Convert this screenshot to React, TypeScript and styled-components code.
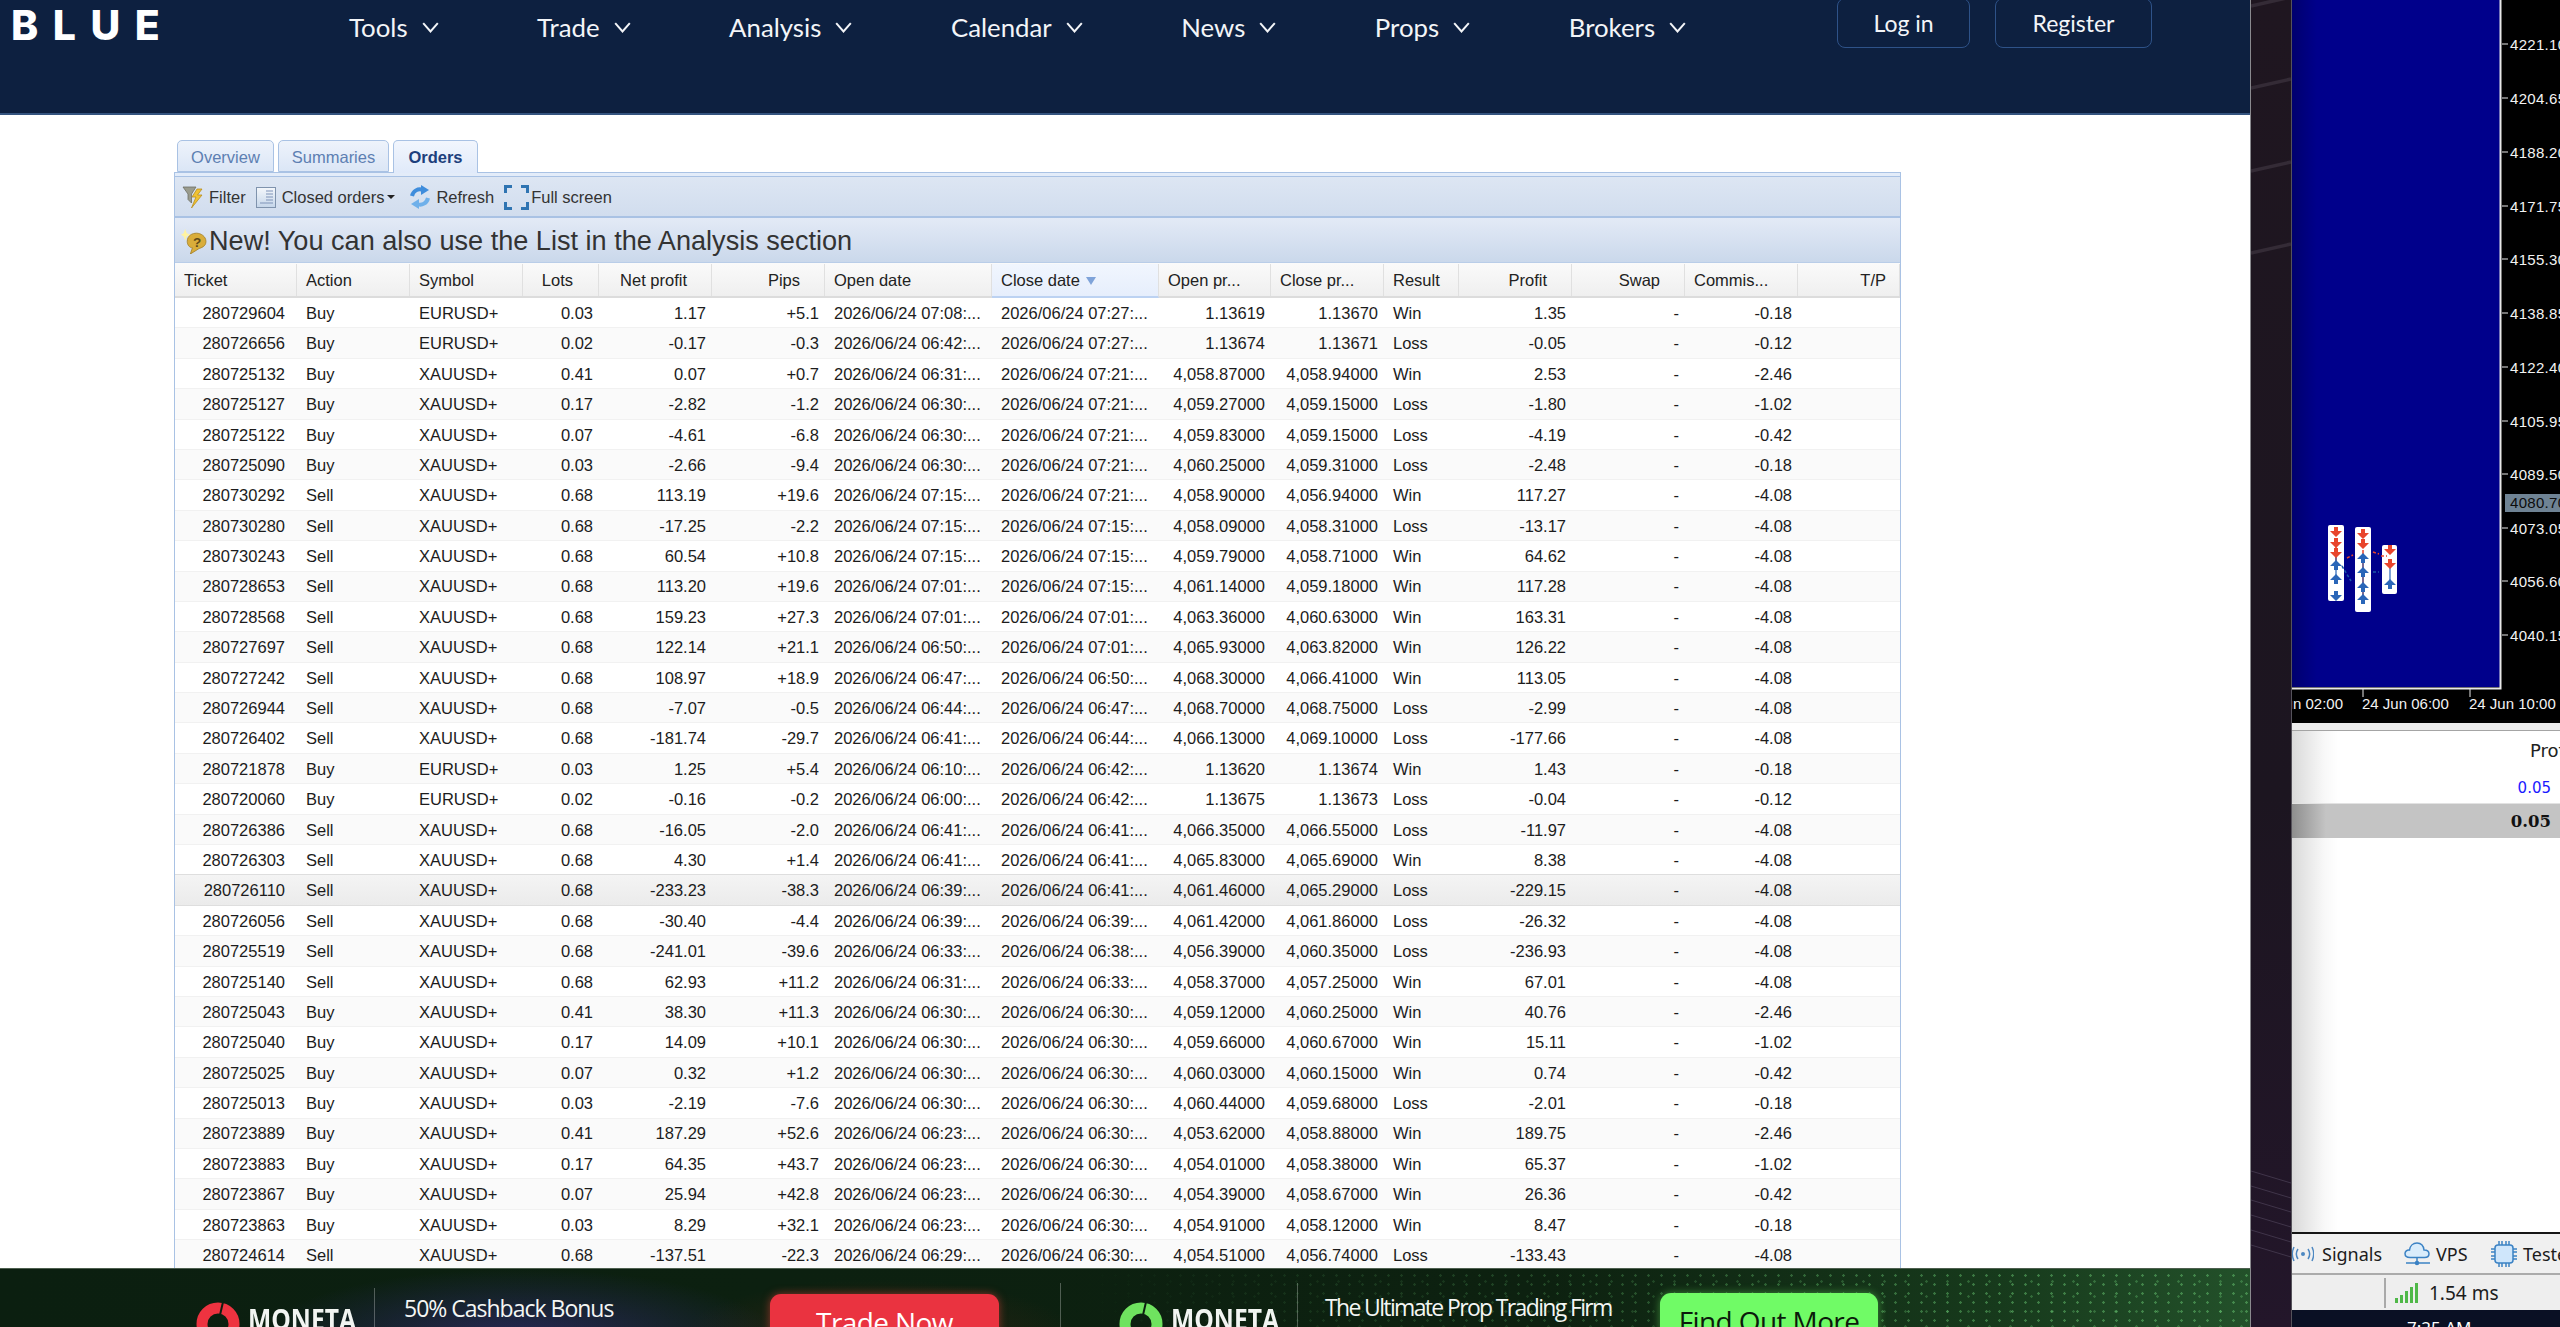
import React from "react";
import styled, { createGlobalStyle } from "styled-components";

const GlobalStyle = createGlobalStyle`
  html, body { margin: 0; padding: 0; background: #fff; overflow: hidden; }
  * { box-sizing: border-box; }
`;

const Screen = styled.div`
  width: 2560px;
  height: 1327px;
  overflow: hidden;
  display: grid;
  grid-template-columns: 2250px 42px 268px;
  font-family: "Liberation Sans", Arial, sans-serif;
`;

const BrowserPane = styled.div`
  display: flex;
  flex-direction: column;
  height: 1327px;
  overflow: hidden;
  background: #fff;
`;

/* ---------- navigation ---------- */
const Nav = styled.header`
  flex: 0 0 115px;
  display: flex;
  align-items: flex-start;
  background: #0d2040;
  border-bottom: 2px solid #34547f;
  color: #fff;
  padding-left: 11px;
`;
const Logo = styled.div`
  font-family: Inter, sans-serif;
  font-weight: 800;
  font-size: 41px;
  line-height: 29px;
  letter-spacing: 14.5px;
  margin-top: 11px;
  width: 338px;
`;
const Menu = styled.nav`
  display: flex;
  gap: 98.5px;
  margin-top: 9px;
  width: 1488px;
`;
const MenuItem = styled.div`
  display: flex;
  align-items: center;
  gap: 14px;
  font-family: Lato, sans-serif;
  font-size: 25.8px;
  line-height: 36px;
  color: #f3f5f8;
`;
const AuthGroup = styled.div`
  display: flex;
  gap: 25px;
  margin-top: -2px;
`;
const AuthButton = styled.button<{ $w: number }>`
  width: ${(p) => p.$w}px;
  height: 50px;
  background: transparent;
  border: 1.5px solid #2e5288;
  border-radius: 8px;
  color: #f3f5f8;
  font-family: Lato, sans-serif;
  font-size: 23px;
  padding: 0;
`;

/* ---------- panel ---------- */
const Main = styled.main`
  flex: 1;
  min-height: 0;
  overflow: hidden;
  padding: 25px 0 0 174px;
`;
const Tabs = styled.div`
  display: flex;
  gap: 4px;
  padding-left: 3px;
  height: 32px;
`;
const Tab = styled.div<{ $w: number; $active?: boolean }>`
  width: ${(p) => p.$w}px;
  height: ${(p) => (p.$active ? 33 : 32)}px;
  text-align: center;
  line-height: 33px;
  font-size: 16.5px;
  border: 1px solid #a9c2e4;
  border-bottom: ${(p) => (p.$active ? "none" : "1px solid #a9c2e4")};
  border-radius: 5px 5px 0 0;
  background: ${(p) => (p.$active ? "linear-gradient(#f2f6fd,#e0eafa)" : "linear-gradient(#eef3fb,#dbe6f6)")};
  color: ${(p) => (p.$active ? "#1d3f7c" : "#5d7fb2")};
  font-weight: ${(p) => (p.$active ? 700 : 400)};
  position: relative;
  z-index: 1;
`;
const Panel = styled.section`
  width: 1727px;
  border-left: 1px solid #a9c2e4;
  border-right: 1px solid #a9c2e4;
`;
const TabRule = styled.div`
  height: 5px;
  background: #e3ecf9;
  border-top: 1px solid #a9c2e4;
  border-bottom: 1px solid #a9c2e4;
`;
const Toolbar = styled.div`
  height: 41px;
  display: flex;
  align-items: center;
  gap: 10px;
  padding: 1px 0 0 7px;
  background: linear-gradient(#dde6f3, #d1ddee);
  border-bottom: 2px solid #a9c2e4;
  color: #333;
  font-size: 16.5px;
`;
const ToolButton = styled.div<{ $gap: number; $mr?: number }>`
  display: flex;
  align-items: center;
  gap: ${(p) => p.$gap}px;
  margin-right: ${(p) => p.$mr ?? 0}px;
`;
const Caret = styled.span`
  width: 0;
  height: 0;
  margin-left: -3px;
  border-left: 4px solid transparent;
  border-right: 4px solid transparent;
  border-top: 4px solid #222;
`;
const Notice = styled.div`
  height: 45px;
  display: flex;
  align-items: center;
  gap: 2px;
  padding: 2px 0 0 6px;
  background: linear-gradient(#e3eaf6, #cad8eb);
  color: #333;
  font-size: 27.1px;
  border-bottom: 1px solid #b9cde8;
`;

const COLS = "122px 113px 113px 76px 113px 113px 167px 167px 112px 113px 75px 113px 113px 113px 102px";

const HeaderRow = styled.div`
  display: grid;
  grid-template-columns: ${COLS};
  height: 35px;
  padding-top: 1px;
  background: linear-gradient(#fafafa, #efefef);
  border-bottom: 2px solid #dcdcdc;
  font-size: 16.5px;
  color: #222;
`;
const HeadCell = styled.div<{ $right?: boolean; $sorted?: boolean; $pr?: number }>`
  display: flex;
  align-items: center;
  justify-content: ${(p) => (p.$right ? "flex-end" : "flex-start")};
  padding: ${(p) => (p.$right ? `0 ${p.$pr ?? 24}px 0 0` : "0 0 0 9px")};
  border-right: 1px solid #e0e0e0;
  white-space: nowrap;
  ${(p) => p.$sorted && "background: linear-gradient(#f1f6fe,#e6eefc); border-bottom: 2px solid #bcd2f2; margin-bottom: -2px;"}
`;
const SortMark = styled.span`
  width: 0;
  height: 0;
  margin: 2px 0 0 6px;
  border-left: 5.5px solid transparent;
  border-right: 5.5px solid transparent;
  border-top: 8px solid #7fa3d9;
`;
const Row = styled.div<{ $even: boolean; $hot?: boolean }>`
  display: grid;
  grid-template-columns: ${COLS};
  height: 30.4px;
  padding-top: 1.5px;
  align-items: center;
  font-size: 16.5px;
  color: #1c1c1c;
  background: ${(p) => (p.$hot ? "linear-gradient(#f4f4f4,#ebebeb)" : p.$even ? "#fafafa" : "#fff")};
  border-bottom: 1px solid ${(p) => (p.$hot ? "#dedede" : "#f1f1f1")};
  ${(p) => p.$hot && "box-shadow: 0 -1px 0 #dedede;"}
`;
const Cell = styled.div<{ $right?: boolean; $pr?: number }>`
  text-align: ${(p) => (p.$right ? "right" : "left")};
  padding: ${(p) => (p.$right ? `0 ${p.$pr ?? 6}px 0 0` : "0 0 0 9px")};
  white-space: nowrap;
`;

/* ---------- banner ---------- */
const Banner = styled.footer`
  position: relative;
  flex: 0 0 59px;
  height: 59px;
  overflow: hidden;
  display: flex;
  align-items: flex-start;
  border-top: 1px solid #4d5f4f;
  padding-left: 196px;
  color: #fff;
  background:
    radial-gradient(ellipse 260px 70px at 520px 70px, rgba(48, 42, 110, 0.75), transparent),
    radial-gradient(ellipse 200px 60px at 880px 70px, rgba(110, 45, 25, 0.35), transparent),
    linear-gradient(90deg, #0b1f10 0, #0d2110 1550px, #173a1c 2000px, #23512a 2250px);
  &::after {
    content: "";
    position: absolute;
    top: 0;
    right: 0;
    bottom: 0;
    width: 1180px;
    background-image:
      radial-gradient(circle, rgba(120, 225, 130, 0.4) 1px, transparent 1.5px),
      radial-gradient(circle, rgba(120, 225, 130, 0.28) 1px, transparent 1.5px);
    background-size: 13px 9px, 21px 15px;
    background-position: 0 2px, 6px 5px;
    -webkit-mask-image: linear-gradient(90deg, transparent 0, #000 80%);
    mask-image: linear-gradient(90deg, transparent 0, #000 80%);
    pointer-events: none;
  }
`;
const Ring = styled.svg<{ $ml: number }>`
  flex: none;
  margin: 33px 0 0 ${(p) => p.$ml}px;
`;
const Brand = styled.div`
  flex: none;
  margin: 33px 0 0 8px;
  font-family: "Open Sans", sans-serif;
  font-weight: 700;
  font-size: 28px;
  line-height: 34px;
  width: 108px;
  transform-origin: left;
  transform: scaleX(0.88);
  color: #f2f5f2;
`;
const Divider = styled.div<{ $ml: number; $h?: number }>`
  flex: none;
  width: 1px;
  height: ${(p) => p.$h ?? 40}px;
  margin: ${(p) => 59 - (p.$h ?? 40)}px 0 0 ${(p) => p.$ml}px;
  background: rgba(255, 255, 255, 0.28);
`;
const Pitch = styled.div<{ $w: number; $ml: number; $mt: number; $ls: number }>`
  flex: none;
  width: ${(p) => p.$w}px;
  margin: ${(p) => p.$mt}px 0 0 ${(p) => p.$ml}px;
  font-family: "Open Sans", sans-serif;
  font-size: 23px;
  line-height: 32px;
  letter-spacing: ${(p) => p.$ls}px;
  white-space: nowrap;
  color: #f4f6f4;
`;
const Cta = styled.div<{ $bg: string; $fg: string; $w: number; $ml: number; $glow: string; $mt: number }>`
  flex: none;
  position: relative;
  z-index: 1;
  width: ${(p) => p.$w}px;
  height: 60px;
  margin: ${(p) => p.$mt}px 0 0 ${(p) => p.$ml}px;
  background: ${(p) => p.$bg};
  color: ${(p) => p.$fg};
  border-radius: 11px;
  box-shadow: 0 0 9px ${(p) => p.$glow};
  font-family: "Open Sans", sans-serif;
  font-size: 28px;
  line-height: 56px;
  letter-spacing: -0.6px;
  text-align: center;
`;

/* ---------- wallpaper strip ---------- */
const Strip = styled.div`
  background: linear-gradient(#1f1620, #1c1520 60%, #23162a);
  border-left: 1px solid #8a8a8e;
  border-right: 1px solid #55525a;
  overflow: hidden;
`;
const StripArt = styled.svg`
  display: block;
`;

/* ---------- terminal window ---------- */
const Terminal = styled.div`
  display: flex;
  flex-direction: column;
  height: 1327px;
  overflow: hidden;
  background: #fff;
`;
const ChartArt = styled.svg`
  display: block;
  flex: none;
  background: #000;
`;
const SplitBar = styled.div`
  flex: none;
  height: 8px;
  background: #ececec;
  border-bottom: 1px solid #a4a4a4;
`;
const Trades = styled.div`
  flex: 0 0 501px;
  overflow: hidden;
  background: linear-gradient(90deg, #d9d9d9 0, #f8f8f8 32px, #fff 46px);
  font-family: "DejaVu Sans", sans-serif;
`;
const TradeHead = styled.div`
  height: 39px;
  line-height: 40px;
  padding-left: 238px;
  font-size: 18px;
  color: #222;
  white-space: nowrap;
`;
const TradeValue = styled.div`
  height: 33px;
  line-height: 36px;
  padding-right: 9px;
  text-align: right;
  font-size: 15px;
  color: #1a1aff;
`;
const TradeTotal = styled.div`
  height: 35px;
  line-height: 35px;
  padding-right: 9px;
  text-align: right;
  font-family: "DejaVu Serif", serif;
  font-weight: 700;
  font-size: 16.5px;
  color: #111;
  border-top: 1px solid #e2e2e2;
  background: linear-gradient(90deg, #8e8e8e 0, #c4c4c4 34px);
`;
const TermTabs = styled.div`
  flex: none;
  height: 43px;
  display: flex;
  align-items: center;
  background: #f0f0f0;
  border-top: 2px solid #161616;
  border-bottom: 2px solid #ababab;
  font-family: "Noto Sans", sans-serif;
  font-size: 18px;
  color: #1c1c1c;
  white-space: nowrap;
`;
const TermTab = styled.div<{ $gap: number; $w: number }>`
  flex: none;
  display: flex;
  align-items: center;
  gap: ${(p) => p.$gap}px;
  width: ${(p) => p.$w}px;
`;
const StatusBar = styled.div`
  flex: none;
  height: 35px;
  display: flex;
  align-items: center;
  background: #eee;
  padding-left: 92px;
  font-family: "Noto Sans", sans-serif;
  font-size: 19px;
  color: #1c1c1c;
`;
const StatusRule = styled.div`
  width: 2px;
  height: 30px;
  background: #a9a9a9;
  margin-right: 9px;
`;
const StatusBars = styled.svg`
  margin-right: 10px;
`;
const Taskbar = styled.div`
  flex: 1;
  background: #0a1024;
  color: #fff;
  font-family: "Noto Sans", sans-serif;
  font-size: 17px;
  line-height: 20px;
  padding: 8px 0 0 115px;
  white-space: nowrap;
`;

/* ---------- data ---------- */
type Trade = [string, string, string, string, string, string, string, string, string, string, string, string, string];
const E = "EURUSD+";
const X = "XAUUSD+";
const trades: Trade[] = [
  ["280729604","Buy",E,"0.03","1.17","+5.1","07:08","07:27","1.13619","1.13670","Win","1.35","-0.18"],
  ["280726656","Buy",E,"0.02","-0.17","-0.3","06:42","07:27","1.13674","1.13671","Loss","-0.05","-0.12"],
  ["280725132","Buy",X,"0.41","0.07","+0.7","06:31","07:21","4,058.87000","4,058.94000","Win","2.53","-2.46"],
  ["280725127","Buy",X,"0.17","-2.82","-1.2","06:30","07:21","4,059.27000","4,059.15000","Loss","-1.80","-1.02"],
  ["280725122","Buy",X,"0.07","-4.61","-6.8","06:30","07:21","4,059.83000","4,059.15000","Loss","-4.19","-0.42"],
  ["280725090","Buy",X,"0.03","-2.66","-9.4","06:30","07:21","4,060.25000","4,059.31000","Loss","-2.48","-0.18"],
  ["280730292","Sell",X,"0.68","113.19","+19.6","07:15","07:21","4,058.90000","4,056.94000","Win","117.27","-4.08"],
  ["280730280","Sell",X,"0.68","-17.25","-2.2","07:15","07:15","4,058.09000","4,058.31000","Loss","-13.17","-4.08"],
  ["280730243","Sell",X,"0.68","60.54","+10.8","07:15","07:15","4,059.79000","4,058.71000","Win","64.62","-4.08"],
  ["280728653","Sell",X,"0.68","113.20","+19.6","07:01","07:15","4,061.14000","4,059.18000","Win","117.28","-4.08"],
  ["280728568","Sell",X,"0.68","159.23","+27.3","07:01","07:01","4,063.36000","4,060.63000","Win","163.31","-4.08"],
  ["280727697","Sell",X,"0.68","122.14","+21.1","06:50","07:01","4,065.93000","4,063.82000","Win","126.22","-4.08"],
  ["280727242","Sell",X,"0.68","108.97","+18.9","06:47","06:50","4,068.30000","4,066.41000","Win","113.05","-4.08"],
  ["280726944","Sell",X,"0.68","-7.07","-0.5","06:44","06:47","4,068.70000","4,068.75000","Loss","-2.99","-4.08"],
  ["280726402","Sell",X,"0.68","-181.74","-29.7","06:41","06:44","4,066.13000","4,069.10000","Loss","-177.66","-4.08"],
  ["280721878","Buy",E,"0.03","1.25","+5.4","06:10","06:42","1.13620","1.13674","Win","1.43","-0.18"],
  ["280720060","Buy",E,"0.02","-0.16","-0.2","06:00","06:42","1.13675","1.13673","Loss","-0.04","-0.12"],
  ["280726386","Sell",X,"0.68","-16.05","-2.0","06:41","06:41","4,066.35000","4,066.55000","Loss","-11.97","-4.08"],
  ["280726303","Sell",X,"0.68","4.30","+1.4","06:41","06:41","4,065.83000","4,065.69000","Win","8.38","-4.08"],
  ["280726110","Sell",X,"0.68","-233.23","-38.3","06:39","06:41","4,061.46000","4,065.29000","Loss","-229.15","-4.08"],
  ["280726056","Sell",X,"0.68","-30.40","-4.4","06:39","06:39","4,061.42000","4,061.86000","Loss","-26.32","-4.08"],
  ["280725519","Sell",X,"0.68","-241.01","-39.6","06:33","06:38","4,056.39000","4,060.35000","Loss","-236.93","-4.08"],
  ["280725140","Sell",X,"0.68","62.93","+11.2","06:31","06:33","4,058.37000","4,057.25000","Win","67.01","-4.08"],
  ["280725043","Buy",X,"0.41","38.30","+11.3","06:30","06:30","4,059.12000","4,060.25000","Win","40.76","-2.46"],
  ["280725040","Buy",X,"0.17","14.09","+10.1","06:30","06:30","4,059.66000","4,060.67000","Win","15.11","-1.02"],
  ["280725025","Buy",X,"0.07","0.32","+1.2","06:30","06:30","4,060.03000","4,060.15000","Win","0.74","-0.42"],
  ["280725013","Buy",X,"0.03","-2.19","-7.6","06:30","06:30","4,060.44000","4,059.68000","Loss","-2.01","-0.18"],
  ["280723889","Buy",X,"0.41","187.29","+52.6","06:23","06:30","4,053.62000","4,058.88000","Win","189.75","-2.46"],
  ["280723883","Buy",X,"0.17","64.35","+43.7","06:23","06:30","4,054.01000","4,058.38000","Win","65.37","-1.02"],
  ["280723867","Buy",X,"0.07","25.94","+42.8","06:23","06:30","4,054.39000","4,058.67000","Win","26.36","-0.42"],
  ["280723863","Buy",X,"0.03","8.29","+32.1","06:23","06:30","4,054.91000","4,058.12000","Win","8.47","-0.18"],
  ["280724614","Sell",X,"0.68","-137.51","-22.3","06:29","06:30","4,054.51000","4,056.74000","Loss","-133.43","-4.08"],
];

const heads: { t: string; r?: boolean; s?: boolean; pr?: number }[] = [
  { t: "Ticket" }, { t: "Action" }, { t: "Symbol" },
  { t: "Lots", r: true, pr: 25 }, { t: "Net profit", r: true }, { t: "Pips", r: true },
  { t: "Open date" }, { t: "Close date", s: true }, { t: "Open pr..." }, { t: "Close pr..." },
  { t: "Result" }, { t: "Profit", r: true }, { t: "Swap", r: true }, { t: "Commis..." }, { t: "T/P", r: true, pr: 13 },
];

const menu = ["Tools", "Trade", "Analysis", "Calendar", "News", "Props", "Brokers"];

const axis: [number, string][] = [
  [44, "4221.10"], [98, "4204.65"], [152, "4188.20"], [206, "4171.75"], [259, "4155.30"],
  [313, "4138.85"], [367, "4122.40"], [421, "4105.95"], [474, "4089.50"], [528, "4073.05"],
  [581, "4056.60"], [635, "4040.15"],
];

/* ---------- drawings ---------- */
const Chevron = () => (
  <svg width="17" height="11" viewBox="0 0 17 11" fill="none" stroke="#f3f5f8" strokeWidth="2">
    <path d="M1.2 1.2 8.5 9.4 15.8 1.2" />
  </svg>
);

const FilterIcon = () => (
  <svg width="23" height="23" viewBox="0 0 23 23">
    <path d="M1 1h13L9.500 8v9L6 13.500V8z" fill="#9a9c8e" stroke="#6d6f64" strokeWidth=".8" />
    <path d="M15 3l-5 8h4l-4.500 11L20 9h-4.500L20 3z" fill="#f0c232" stroke="#b78e20" strokeWidth=".8" />
  </svg>
);
const DocIcon = () => (
  <svg width="20" height="21" viewBox="0 0 20 21">
    <defs>
      <linearGradient id="docfill" x1="0" y1="0" x2="0" y2="1">
        <stop offset="0" stopColor="#f4f7fb" />
        <stop offset="1" stopColor="#c5d6ea" />
      </linearGradient>
    </defs>
    <rect x=".5" y=".5" width="19" height="20" fill="url(#docfill)" stroke="#7f93ad" />
    <path d="M10 4h7M10 7h7M10 10h7M10 13h7M4 16h13" stroke="#7f93b8" strokeWidth="1" />
  </svg>
);
const RefreshIcon = () => (
  <svg width="22" height="24" viewBox="0 0 22 24" fill="none">
    <path d="M3 11C4 6 9 3 14 5" stroke="#3f8ddc" strokeWidth="4" />
    <path d="M12 0l8 5-8 5z" fill="#3f8ddc" />
    <path d="M19 13c-1 5-6 8-11 6" stroke="#6fb0ea" strokeWidth="4" />
    <path d="M10 24l-8-5 8-5z" fill="#6fb0ea" />
  </svg>
);
const FullIcon = () => (
  <svg width="25" height="25" viewBox="0 0 25 25" fill="none" stroke="#2f74b2" strokeWidth="3">
    <path d="M1.500 8V1.500H8M17 1.500h6.500V8M23.500 17v6.500H17M8 23.500H1.500V17" />
  </svg>
);
const BulbIcon = () => (
  <svg width="26" height="26" viewBox="0 0 25 25">
    <path d="M6 13c0-6 5-8 9-8s9 3 9 8-5 6-7 7l-8 5 2-6c-3 0-5-3-5-6z" fill="#d9ad3a" stroke="#a37f24" strokeWidth=".8" />
    <path d="M4 1l1.500 4L9 6.500 5.500 8 4 12 2.500 8 0 6.500 2.500 5z" fill="#fff3a0" />
    <text x="11.500" y="18" fontSize="13" fontWeight="700" fill="#5d4a18" fontFamily="Liberation Sans, sans-serif">?</text>
  </svg>
);
const RingIcon = ({ color, ml }: { color: string; ml: number }) => (
  <Ring $ml={ml} width="44" height="44" viewBox="0 0 44 44" fill="none">
    <circle cx="22" cy="22" r="16" stroke={color} strokeWidth="11" />
    <path d="M27 0 24 13" stroke="#0c1f10" strokeWidth="2" />
  </Ring>
);

const arrow = (cx: number, cy: number, c: string, up: boolean, key: string) => {
  const d = up ? 1 : -1;
  return (
    <path
      key={key}
      fill={c}
      d={`M${cx} ${cy - 5 * d}L${cx + 6} ${cy + 1 * d}H${cx + 2}V${cy + 5 * d}H${cx - 2}V${cy + 1 * d}H${cx - 6}z`}
    />
  );
};

const ChartDrawing = () => {
  const red = "#e8452c";
  const blue = "#2a66b8";
  return (
    <ChartArt width="268" height="723" viewBox="0 0 268 723">
      <defs>
        <linearGradient id="plot" x1="0" y1="0" x2="1" y2="0">
          <stop offset="0" stopColor="#00006e" />
          <stop offset=".12" stopColor="#00008b" />
        </linearGradient>
      </defs>
      <rect width="208" height="687" fill="url(#plot)" />
      <path d="M208.500 0V688.500H0" stroke="#e8e8e8" strokeWidth="2" fill="none" />
      <g fill="#f2f2f2" fontFamily="Liberation Sans, sans-serif" fontSize="15">
        {axis.map(([y, t]) => (
          <g key={t}>
            <rect x="210" y={y - 0.5} width="6" height="1" fill="#e8e8e8" />
            <text x="218" y={y + 5.5} letterSpacing=".3">{t}</text>
          </g>
        ))}
        <rect x="213" y="494" width="55" height="18" fill="#6f8394" />
        <text x="218" y="508" fill="#0c0c0c" letterSpacing=".3">4080.70</text>
        <rect x="70.500" y="688" width="1" height="9" fill="#e8e8e8" />
        <rect x="177.500" y="688" width="1" height="9" fill="#e8e8e8" />
        <text x="51" y="709" textAnchor="end">24 Jun 02:00</text>
        <text x="70" y="709">24 Jun 06:00</text>
        <text x="177" y="709">24 Jun 10:00</text>
      </g>
      <rect x="36" y="525" width="16" height="76" rx="2" fill="#fff" />
      <rect x="63" y="527" width="16" height="85" rx="2" fill="#fff" />
      <rect x="90" y="545" width="15" height="49" rx="2" fill="#fff" />
      <path d="M44 538V566M71 550V596" stroke={red} strokeWidth="1.500" />
      <path d="M44 550V578M71 562V604M98 568V585" stroke={blue} strokeWidth="1.200" />
      {arrow(44, 532, red, false, "a")}
      {arrow(44, 543, red, false, "b")}
      {arrow(44, 553, red, false, "c")}
      {arrow(44, 565, blue, true, "d")}
      {arrow(44, 579, blue, true, "e")}
      {arrow(44, 596, blue, false, "f")}
      {arrow(71, 534, red, false, "g")}
      {arrow(71, 544, red, false, "h")}
      {arrow(71, 558, blue, true, "i")}
      {arrow(71, 572, blue, true, "j")}
      {arrow(71, 587, blue, true, "k")}
      {arrow(71, 599, blue, true, "l")}
      {arrow(98, 550, red, false, "m")}
      {arrow(98, 564, red, false, "n")}
      {arrow(98, 584, blue, true, "o")}
      <path d="M55 558l6-3M81 552l6 2M89 556h6" stroke={red} strokeWidth="1.500" strokeDasharray="3 2" fill="none" />
      <path d="M50 566l9 15M81 572h6" stroke="#1c5aa8" strokeWidth="1.500" strokeDasharray="3 2" fill="none" />
    </ChartArt>
  );
};

const StripDrawing = () => {
  const top = [6, 88, 171, 253];
  const low = [1171, 1186, 1200, 1215, 1230, 1245];
  return (
    <StripArt width="40" height="1327" viewBox="0 0 40 1327" fill="none">
      {top.map((y) => (
        <path key={y} d={`M0 ${y}L40 ${y - 9}`} stroke="#342b36" strokeWidth="3.5" />
      ))}
      {low.map((y) => (
        <path key={y} d={`M0 ${y}L40 ${y + 12}`} stroke="#40354a" strokeWidth="1" />
      ))}
    </StripArt>
  );
};

const SignalIcon = () => (
  <svg width="22" height="22" viewBox="0 0 22 22" fill="none" stroke="#4d88c2" strokeWidth="1.500">
    <circle cx="11" cy="11" r="2" fill="#4d88c2" stroke="none" />
    <path d="M6 6c-2 3-2 7 0 10M16 6c2 3 2 7 0 10M2 4c-2 4-2 10 0 14M20 4c2 4 2 10 0 14" />
  </svg>
);
const CloudIcon = () => (
  <svg width="26" height="24" viewBox="0 0 26 24" fill="#d9ecfb" stroke="#3b82c4" strokeWidth="1.500">
    <path d="M6 15.500C2.500 15.500 1 13.500 1 11.500S3 7.500 5.500 8C6 4 9 1 13 1s6.500 3 7 7c3-.2 5 1.500 5 3.700s-1.500 3.800-4.500 3.800z" />
    <path d="M13 15.500V20M2 21h24" fill="none" />
    <circle cx="13" cy="21" r="1.500" fill="#3b82c4" />
  </svg>
);
const ChipIcon = () => (
  <svg width="26" height="26" viewBox="0 0 26 26" fill="none" stroke="#3b82c4" strokeWidth="1.500">
    <rect x="4" y="4" width="18" height="18" rx="3" fill="#cfe6fb" />
    <path d="M8 0v4M11 0v4M15 0v4M18 0v4M8 22v4M11 22v4M15 22v4M18 22v4M0 8h4M0 11h4M0 15h4M0 18h4M22 8h4M22 11h4M22 15h4M22 18h4" />
  </svg>
);
const BarsIcon = () => (
  <StatusBars width="24" height="20" viewBox="0 0 24 20" fill="#4fb848">
    <rect x="0" y="15" width="3" height="5" />
    <rect x="5" y="12" width="3" height="8" />
    <rect x="10" y="8" width="3" height="12" />
    <rect x="15" y="4" width="3" height="16" />
    <rect x="20" y="0" width="3" height="20" />
  </StatusBars>
);

export default function App() {
  return (
    <Screen>
      <GlobalStyle />
      <BrowserPane>
        <Nav>
          <Logo>BLUE</Logo>
          <Menu>
            {menu.map((m) => (
              <MenuItem key={m}>
                {m}
                <Chevron />
              </MenuItem>
            ))}
          </Menu>
          <AuthGroup>
            <AuthButton $w={133}>Log in</AuthButton>
            <AuthButton $w={157}>Register</AuthButton>
          </AuthGroup>
        </Nav>
        <Main>
          <Tabs>
            <Tab $w={97}>Overview</Tab>
            <Tab $w={111}>Summaries</Tab>
            <Tab $w={85} $active>Orders</Tab>
          </Tabs>
          <Panel>
            <TabRule />
            <Toolbar>
              <ToolButton $gap={4}><FilterIcon />Filter</ToolButton>
              <ToolButton $gap={6} $mr={4}><DocIcon />Closed orders<Caret /></ToolButton>
              <ToolButton $gap={5}><RefreshIcon />Refresh</ToolButton>
              <ToolButton $gap={2}><FullIcon />Full screen</ToolButton>
            </Toolbar>
            <Notice><BulbIcon />New! You can also use the List in the Analysis section</Notice>
            <HeaderRow>
              {heads.map((h) => (
                <HeadCell key={h.t} $right={h.r} $sorted={h.s} $pr={h.pr}>
                  {h.t}
                  {h.s && <SortMark />}
                </HeadCell>
              ))}
            </HeaderRow>
            {trades.map((t, i) => (
              <Row key={t[0]} $even={i % 2 === 1} $hot={t[0] === "280726110"}>
                <Cell $right $pr={12}>{t[0]}</Cell>
                <Cell>{t[1]}</Cell>
                <Cell>{t[2]}</Cell>
                <Cell $right>{t[3]}</Cell>
                <Cell $right>{t[4]}</Cell>
                <Cell $right>{t[5]}</Cell>
                <Cell>{`2026/06/24 ${t[6]}:...`}</Cell>
                <Cell>{`2026/06/24 ${t[7]}:...`}</Cell>
                <Cell $right>{t[8]}</Cell>
                <Cell $right>{t[9]}</Cell>
                <Cell>{t[10]}</Cell>
                <Cell $right>{t[11]}</Cell>
                <Cell $right>-</Cell>
                <Cell $right>{t[12]}</Cell>
                <Cell />
              </Row>
            ))}
          </Panel>
        </Main>
        <Banner>
          <RingIcon color="#ee3340" ml={0} />
          <Brand>MONETA</Brand>
          <Divider $ml={18} />
          <Pitch $w={240} $ml={29} $mt={23} $ls={-1}>50% Cashback Bonus</Pitch>
          <Cta $bg="#ea3340" $fg="#fff" $w={229} $ml={126} $glow="rgba(234,70,60,.55)" $mt={25}>Trade Now</Cta>
          <Divider $ml={61} $h={45} />
          <RingIcon color="#6fe35f" ml={58} />
          <Brand>MONETA</Brand>
          <Divider $ml={18} $h={45} />
          <Pitch $w={320} $ml={27} $mt={22} $ls={-1.65}>The Ultimate Prop Trading Firm</Pitch>
          <Cta $bg="#70fb66" $fg="#0b1a0b" $w={218} $ml={15} $glow="rgba(112,251,102,.45)" $mt={24}>Find Out More</Cta>
        </Banner>
      </BrowserPane>
      <Strip>
        <StripDrawing />
      </Strip>
      <Terminal>
        <ChartDrawing />
        <SplitBar />
        <Trades>
          <TradeHead>Profit</TradeHead>
          <TradeValue>0.05</TradeValue>
          <TradeTotal>0.05</TradeTotal>
        </Trades>
        <TermTabs>
          <TermTab $gap={8} $w={112}><SignalIcon />Signals</TermTab>
          <TermTab $gap={6} $w={87}><CloudIcon />VPS</TermTab>
          <TermTab $gap={6} $w={120}><ChipIcon />Tester</TermTab>
        </TermTabs>
        <StatusBar>
          <StatusRule />
          <BarsIcon />
          1.54 ms
        </StatusBar>
        <Taskbar>7:25 AM</Taskbar>
      </Terminal>
    </Screen>
  );
}
